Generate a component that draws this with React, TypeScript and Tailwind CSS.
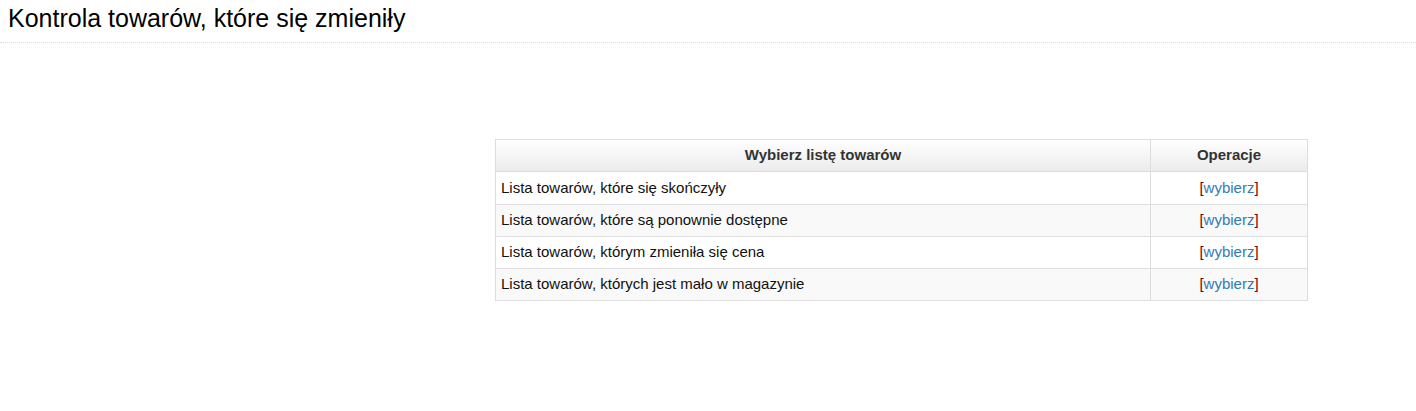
const rows = [
  "Lista towarów, które się skończyły",
  "Lista towarów, które są ponownie dostępne",
  "Lista towarów, którym zmieniła się cena",
  "Lista towarów, których jest mało w magazynie",
];

const App = () => {
  return (
    <div className="min-h-screen bg-white text-[#333] font-['Liberation_Sans',Arial,sans-serif]">
      <div className="px-2 pt-[3px] pb-[9px] border-b border-dotted border-[#ddd]">
        <h1 className="text-[25px] leading-[30px] text-black">Kontrola towarów, które się zmieniły</h1>
      </div>

      <div className="pt-[96px] pl-[495px]">
        <table className="w-[813px] border-collapse border border-[#ddd] text-[15px]">
          <thead>
            <tr className="bg-gradient-to-b from-white to-[#ebebeb]">
              <th className="h-[32px] border border-[#ddd] font-bold text-[15px] text-[#333]">Wybierz listę towarów</th>
              <th className="h-[32px] w-[157px] border border-[#ddd] font-bold text-[15px] text-[#333]">Operacje</th>
            </tr>
          </thead>
          <tbody>
            {rows.map((label, i) => (
              <tr key={label} className={i % 2 === 1 ? "bg-[#f9f9f9]" : "bg-white"}>
                <td className={`${i === 0 ? "h-[33px]" : "h-[32px]"} px-[5px] border border-[#ddd] text-[#111]`}>{label}</td>
                <td className="border border-[#ddd] text-center">
                  <span className="text-[#800000]">[</span>
                  <a href="#" className="text-[#337ab7]">wybierz</a>
                  <span className="text-[#800000]">]</span>
                </td>
              </tr>
            ))}
          </tbody>
        </table>
      </div>
    </div>
  );
};

export default App;
